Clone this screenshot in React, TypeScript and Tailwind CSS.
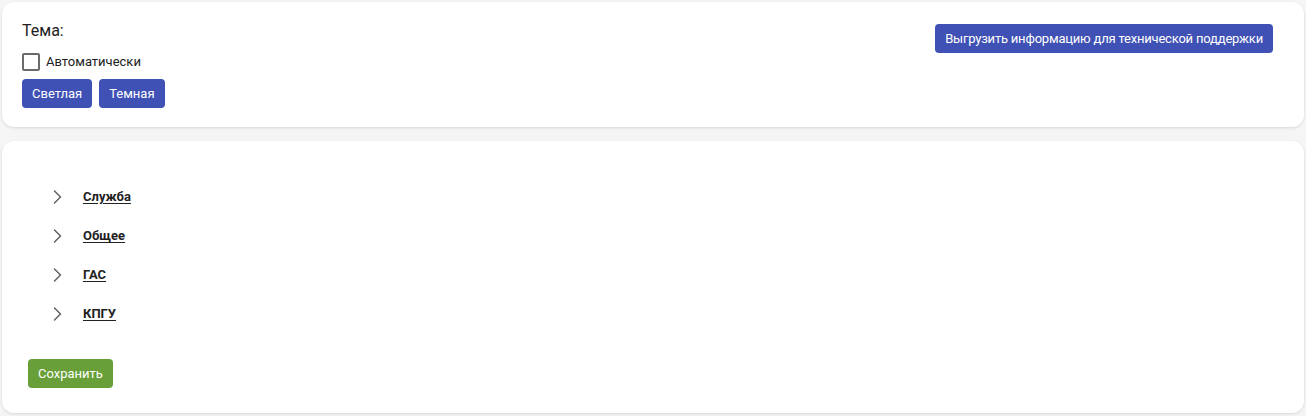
import { useState } from 'react';

const font = { fontFamily: 'Roboto, "Noto Sans", sans-serif' };

const sections = ['Служба', 'Общее', 'ГАС', 'КПГУ'];

function Chevron() {
  return (
    <svg width="16" height="16" viewBox="0 0 16 16" className="shrink-0">
      <path d="M4.5 2l6 6-6 6" fill="none" stroke="#616161" strokeWidth="1.5" strokeLinecap="round" strokeLinejoin="round" />
    </svg>
  );
}

export default function App() {
  const [auto, setAuto] = useState(false);

  return (
    <div className="min-h-[416px] bg-[#f5f5f5] pt-[2px] px-[2px]" style={font}>
      <div className="flex items-start justify-between rounded-xl bg-white pt-[18px] pb-[19px] pl-[20px] pr-[31px] shadow-[0_1px_3px_rgba(0,0,0,0.12)]">
        <div className="flex flex-col">
          <div className="text-base leading-[22px] text-[#212121]">Тема:</div>
          <label className="mt-[10px] flex h-[20px] items-center gap-[6px] cursor-pointer">
            <input
              type="checkbox"
              checked={auto}
              onChange={() => setAuto(!auto)}
              className="h-[18px] w-[18px] appearance-none rounded-[2px] border-2 border-[#6b6b6b] bg-white"
            />
            <span className="text-[13px] text-[#212121]">Автоматически</span>
          </label>
          <div className="mt-[7px] flex gap-[7px]">
            <button className="h-[29px] rounded bg-[#3f51b5] px-[10px] text-[13px] text-white">Светлая</button>
            <button className="h-[29px] rounded bg-[#3f51b5] px-[10px] text-[13px] text-white">Темная</button>
          </div>
        </div>
        <button className="mt-[4px] h-[29px] rounded bg-[#3f51b5] px-[10px] text-[13px] tracking-[-0.2px] text-white">
          Выгрузить информацию для технической поддержки
        </button>
      </div>

      <div className="mt-[14px] rounded-xl bg-white pt-[36px] pb-[25px] pl-[26px] shadow-[0_1px_3px_rgba(0,0,0,0.12)]">
        <div className="ml-[22px] flex flex-col">
          {sections.map((s) => (
            <div key={s} className="flex h-[39px] items-center gap-[17px]">
              <Chevron />
              <span className="text-[13px] font-bold text-[#212121] underline underline-offset-2">{s}</span>
            </div>
          ))}
        </div>
        <button className="mt-[26px] h-[29px] rounded bg-[#689f38] px-[10px] text-[13px] text-white">Сохранить</button>
      </div>
    </div>
  );
}
